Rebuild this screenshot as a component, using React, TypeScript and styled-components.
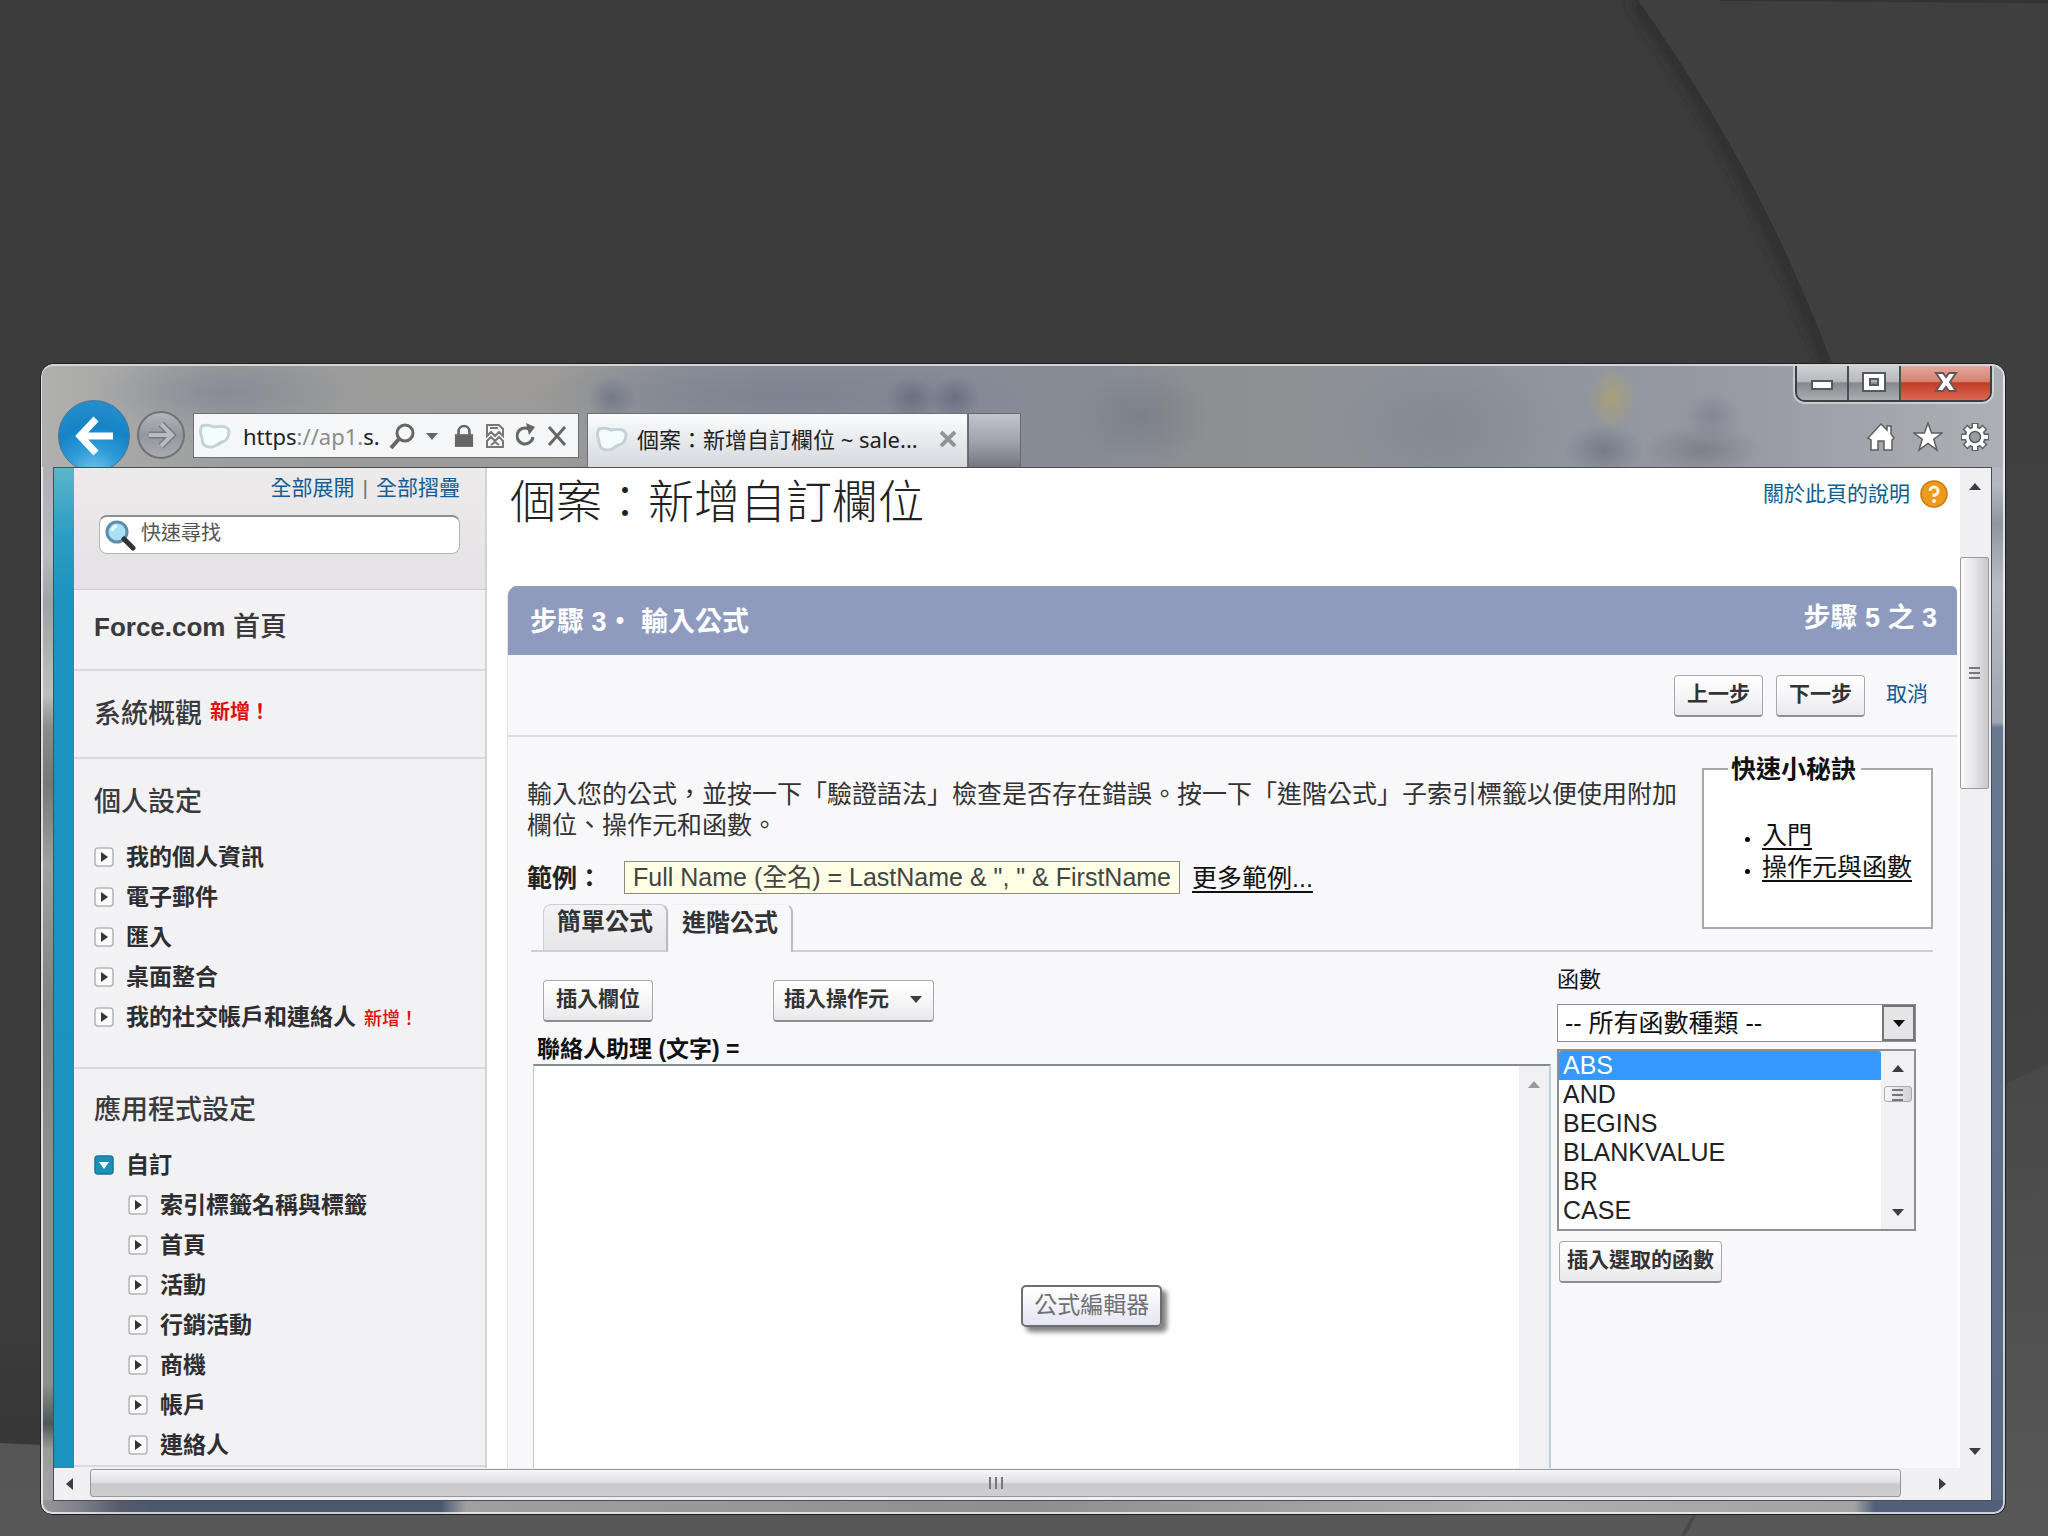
import React from "react";
import styled, { createGlobalStyle, css } from "styled-components";

const sans = `"Liberation Sans", "Noto Sans CJK TC", sans-serif`;
const chromeFont = `"Noto Sans", "Noto Sans CJK TC", sans-serif`;

const GlobalStyle = createGlobalStyle`
  *, *::before, *::after { box-sizing: border-box; }
  body { margin: 0; background: #3c3c3c; font-family: ${sans}; }
  button, input, select, textarea { font-family: inherit; margin: 0; }
  ul, p, h1, h2, h3 { margin: 0; padding: 0; }
`;

/* ---------- slide and window frame ---------- */

const Slide = styled.div`
  position: relative;
  display: flex;
  flex-direction: column;
  height: 100vh;
  padding: 363px 42px 21px 40px;
  overflow: hidden;
`;

const Backdrop = styled.svg`
  position: absolute;
  inset: 0;
  width: 100%;
  height: 100%;
`;

const BrowserWindow = styled.div`
  position: relative;
  flex: 1;
  min-height: 0;
  display: flex;
  flex-direction: column;
  padding: 0 13px 13px 12px;
  border: 1px solid #1d2024;
  border-radius: 14px 14px 12px 12px;
  box-shadow: inset 0 0 0 2px rgba(255, 255, 255, 0.7);
  background:
    linear-gradient(90deg, #999 0, #7d7f8a 40px, #56596c 80px, #4a5870 120px, #4a5870 400px, #a09fa1 425px, #8e8e90 50%, #b0afb0 75%, #a3a2a4 calc(100% - 150px), #50607a calc(100% - 130px), #50607a 100%) bottom / 100% 14px no-repeat,
    linear-gradient(180deg, #a6a9ae 0, #b5b9c0 120px, #8f969f 160px, #b9bcc4 220px, #a0a7b3 358px, #68788f 364px, #5b6a82 100%) right / 15px 100% no-repeat,
    linear-gradient(180deg, #a3a3a3 0, #b9b8c4 190px, #a0a0a8 240px, #bfc0bc 330px, #8b8b8b 364px, #777 420px, #a0a0a0 500px, #808080 640px, #8f8f8f 800px, #8e8f90 1020px, #50555a 1060px, #9c9c9e 1085px, #a6a6a8 100%) left / 13px 100% no-repeat,
    #999;
`;

const Chrome = styled.header`
  flex: none;
  display: flex;
  justify-content: space-between;
  height: 103px;
  margin: 0 -11px;
  padding: 0 11px;
  overflow: hidden;
  border-radius: 12px 12px 0 0;
  border-top: 2px solid #d3d4d6;
  background:
    radial-gradient(ellipse 24px 32px at 1570px 32px, rgba(186, 168, 84, 0.55), transparent),
    radial-gradient(ellipse 40px 26px at 1562px 84px, rgba(100, 106, 120, 0.6), transparent),
    radial-gradient(ellipse 60px 26px at 1660px 84px, rgba(106, 112, 122, 0.6), transparent),
    radial-gradient(ellipse 30px 24px at 1670px 50px, rgba(106, 112, 128, 0.45), transparent),
    radial-gradient(ellipse 120px 80px at 1400px 60px, rgba(118, 128, 138, 0.5), transparent),
    radial-gradient(ellipse 130px 44px at 180px 26px, rgba(116, 122, 142, 0.5), transparent),
    radial-gradient(ellipse 24px 22px at 570px 32px, rgba(90, 98, 120, 0.5), transparent),
    radial-gradient(ellipse 26px 22px at 870px 32px, rgba(88, 96, 120, 0.6), transparent),
    radial-gradient(ellipse 26px 22px at 912px 32px, rgba(88, 96, 120, 0.6), transparent),
    radial-gradient(ellipse 260px 44px at 740px 30px, rgba(108, 116, 134, 0.45), transparent),
    radial-gradient(ellipse 70px 50px at 1100px 50px, rgba(108, 114, 122, 0.45), transparent),
    linear-gradient(90deg, #b0b0ae 0, #9b9c9d 10%, #9c9b98 26%, #8c9099 32%, #868b96 52%, #8d9092 60%, #8f969f 78%, #9a9aa4 87%, #adb0b4 100%);
`;

const NavGroup = styled.div`
  display: flex;
  align-items: flex-end;
`;

const BackButton = styled.button`
  display: grid;
  place-items: center;
  width: 72px;
  height: 72px;
  margin: 0 7px -5px 5px;
  padding: 0;
  border: 1px solid #4a7391;
  border-radius: 50%;
  background: radial-gradient(circle at 50% 105%, #7cc6ee 0, #2f9cd9 32%, #1583c6 60%, #2a93cf 100%);
`;

const ForwardButton = styled.button`
  display: grid;
  place-items: center;
  width: 48px;
  height: 48px;
  margin: 0 8px 8px 0;
  padding: 0;
  border: 2px solid #6f7379;
  border-radius: 50%;
  background: linear-gradient(#b3b5ba, #94979d 50%, #a9abb0);
`;

const AddressBar = styled.div`
  display: flex;
  align-items: center;
  gap: 11px;
  width: 386px;
  height: 45px;
  margin: 0 8px 9px 0;
  padding: 0 11px 0 4px;
  border: 1px solid #6c7075;
  background: #f5f6f7;
  font-family: ${chromeFont};
  font-size: 22px;
  line-height: 32px;
  color: #222;
  i { font-style: normal; color: #8b8b8b; }
`;

const AddressText = styled.span`
  flex: 1;
  white-space: nowrap;
`;

const SearchTools = styled.div`
  flex: none;
  display: flex;
  align-items: center;
  gap: 10px;
  margin: 0 4px 0 -8px;
`;

const IconButton = styled.button`
  display: grid;
  place-items: center;
  flex: none;
  padding: 0;
  border: 0;
  background: none;
`;

const Tab = styled.div`
  display: flex;
  align-items: center;
  gap: 8px;
  width: 381px;
  height: 54px;
  padding: 0 11px 3px 7px;
  border: 1px solid #6d7076;
  border-bottom: 0;
  background: linear-gradient(#fbfcfd, #e3e6ea 60%, #d6dade);
  font-family: ${chromeFont};
  font-size: 22px;
  line-height: 32px;
  color: #222;
  white-space: nowrap;
  span { flex: 1; }
`;

const NewTab = styled.button`
  width: 53px;
  height: 54px;
  border: 1px solid #666a70;
  border-bottom: 0;
  background: linear-gradient(#c2c5cc, #a2a5ac 50%, #74777d);
`;

const ChromeRight = styled.div`
  display: flex;
  flex-direction: column;
  align-items: flex-end;
  justify-content: space-between;
`;

const WindowControls = styled.div`
  display: flex;
  overflow: hidden;
  border: 2px solid #3c3f45;
  border-top: 0;
  border-radius: 0 0 10px 10px;
  box-shadow: 0 0 0 2px rgba(220, 222, 226, 0.7);
`;

const ControlButton = styled.button<{ $close?: boolean }>`
  display: grid;
  place-items: center;
  width: ${(p) => (p.$close ? 89 : 52)}px;
  height: 34px;
  padding: 0 0 2px;
  border: 0;
  border-right: ${(p) => (p.$close ? "0" : "2px solid #4c4f55")};
  background: ${(p) =>
    p.$close
      ? "linear-gradient(#e5a79b, #d88373 45%, #c23c25 50%, #dd6852 100%)"
      : "linear-gradient(#cfd0d3, #b8b9bd 45%, #85888d 50%, #a9acb1 100%)"};
`;

const ToolIcons = styled.div`
  display: flex;
  gap: 17px;
  margin: 0 2px 15px 0;
`;

/* ---------- viewport ---------- */

const Viewport = styled.div`
  flex: 1;
  min-height: 0;
  display: flex;
  flex-direction: column;
  border: 1px solid #4a4d52;
  background: #fff;
`;

const Page = styled.div`
  flex: 1;
  min-height: 0;
  display: flex;
`;

const BrandStrip = styled.div`
  flex: none;
  width: 20px;
  background: linear-gradient(#5cb6cb 0, #2f9fc3 60px, #1b92bf 130px, #1a93c0 100%);
`;

const Sidebar = styled.nav`
  flex: none;
  width: 413px;
  overflow: hidden;
  border-right: 2px solid #d3d2d6;
  background: #f2f1f4;
`;

const QuickBox = styled.div`
  display: flex;
  flex-direction: column;
  gap: 13px;
  padding: 6px 25px 35px 25px;
  border-bottom: 1px solid #cfcdd0;
  background: linear-gradient(#eceaeb, #e4e2e4);
`;

const ToggleLinks = styled.div`
  display: flex;
  justify-content: flex-end;
  gap: 8px;
  font-size: 21px;
  line-height: 28px;
  color: #777;
`;

const BlueLink = styled.a`
  font-size: 21px;
  color: #0f5c96;
  text-decoration: none;
`;

const SearchField = styled.label`
  display: flex;
  align-items: center;
  gap: 5px;
  height: 39px;
  padding: 0 4px;
  border: 1px solid #b5b5b8;
  border-top: 2px solid #8f8f92;
  border-radius: 8px;
  background: #fff;
`;

const SearchInput = styled.input`
  flex: 1;
  min-width: 0;
  padding: 0 0 4px;
  border: 0;
  outline: 0;
  background: transparent;
  font-size: 20px;
  line-height: 28px;
  color: #444;
  &::placeholder { color: #555; opacity: 1; }
`;

const SideSection = styled.section<{ $top: number; $bottom: number }>`
  padding: ${(p) => p.$top}px 20px ${(p) => p.$bottom}px;
  border-bottom: 2px solid #dad9dd;
`;

const SideHeading = styled.h2`
  font-size: 27px;
  line-height: 32px;
  font-weight: 500;
  color: #3a3a3d;
  b { font-size: 26px; }
`;

const NewFlag = styled.span<{ $small?: boolean }>`
  margin-left: 8px;
  font-size: ${(p) => (p.$small ? 18 : 20)}px;
  font-weight: ${(p) => (p.$small ? 500 : 700)};
  color: #e30b0b;
  vertical-align: ${(p) => (p.$small ? "baseline" : "4px")};
  line-height: 20px;
`;

const Tree = styled.ul<{ $nested?: boolean }>`
  list-style: none;
  ${(p) => (p.$nested ? css`padding-left: 34px;` : css`padding-top: 19px;`)}
`;

const TreeRow = styled.li`
  display: flex;
  align-items: center;
  height: 40px;
  gap: 12px;
  white-space: nowrap;
`;

const TreeLink = styled.a`
  font-size: 23px;
  line-height: 32px;
  font-weight: 700;
  color: #2e2e31;
  text-decoration: none;
`;

const Main = styled.main`
  flex: 1;
  min-width: 0;
  overflow: hidden;
  display: flex;
  flex-direction: column;
  padding: 0 3px 0 20px;
`;

const PageHead = styled.div`
  flex: none;
  display: flex;
  justify-content: space-between;
  align-items: flex-start;
  height: 118px;
  padding: 6px 9px 0 3px;
`;

const PageTitle = styled.h1`
  font-size: 46px;
  line-height: 56px;
  font-weight: 300;
  color: #222;
`;

const HelpLink = styled.a`
  display: flex;
  align-items: center;
  gap: 10px;
  font-size: 21px;
  line-height: 40px;
  color: #10608f;
  text-decoration: none;
`;

const Block = styled.section`
  flex: 1;
  min-height: 0;
  display: flex;
  flex-direction: column;
  border-left: 1px solid #e2e1e6;
  border-radius: 10px 6px 0 0;
  overflow: hidden;
  background: #f8f7fa;
`;

const BlockHead = styled.div`
  flex: none;
  display: flex;
  justify-content: space-between;
  height: 69px;
  padding: 18px 20px 0 22px;
  border-top: 2px solid #929db4;
  background: #8e9bbe;
  color: #fff;
`;

const StepTitle = styled.h2`
  font-size: 27px;
  line-height: 32px;
  font-weight: 700;
`;

const StepCount = styled.div`
  font-size: 27px;
  line-height: 24px;
  font-weight: 700;
`;

const ActionRow = styled.div`
  flex: none;
  display: flex;
  justify-content: flex-end;
  align-items: flex-start;
  gap: 13px;
  padding: 20px 29px 18px;
  border-bottom: 2px solid #dddce0;
  ${BlueLink} { margin-left: 8px; line-height: 38px; }
`;

const PushButton = styled.button<{ $pad?: number }>`
  display: flex;
  align-items: center;
  gap: 20px;
  height: 42px;
  padding: 0 ${(p) => p.$pad ?? 12}px 4px;
  border: 1px solid #a9a8ac;
  border-bottom: 2px solid #8f8e92;
  border-radius: 4px;
  background: linear-gradient(#fff, #f6f5f7 50%, #e9e8ea);
  font-size: 21px;
  line-height: 30px;
  font-weight: 700;
  color: #333;
  white-space: nowrap;
`;

const Intro = styled.div`
  flex: none;
  display: grid;
  grid-template-columns: minmax(0, 1fr) 231px;
  column-gap: 16px;
  margin: 0 24px 0 23px;
  padding-top: 16px;
  border-bottom: 2px solid #cfced2;
`;

const Explain = styled.div`
  display: flex;
  flex-direction: column;
  padding-top: 26px;
`;

const Lead = styled.p`
  margin-left: -4px;
  font-size: 25px;
  line-height: 31px;
  color: #333;
`;

const ExampleRow = styled.div`
  display: flex;
  align-items: center;
  margin: 20px 0 10px -4px;
  font-size: 25px;
  line-height: 32px;
  color: #222;
`;

const ExampleBox = styled.code`
  height: 33px;
  margin: 0 12px 0 22px;
  padding: 0 8px;
  border: 1px solid #8b8b80;
  background: #ffffe6;
  font-family: inherit;
  line-height: 30px;
  color: #444;
`;

const DarkLink = styled.a`
  color: #111;
  text-decoration: underline;
  text-underline-offset: 4px;
`;

const Tabs = styled.div`
  display: flex;
  margin: 0 0 -2px 12px;
`;

const FormulaTab = styled.button<{ $active?: boolean }>`
  height: 48px;
  padding: 0 13px 12px;
  border: 1px solid ${(p) => (p.$active ? "#f0eff3" : "#cfced3")};
  border-right: 2px solid #bdbcc2;
  border-bottom: ${(p) => (p.$active ? "0" : "2px solid #cfced2")};
  border-radius: 8px 8px 0 0;
  background: ${(p) => (p.$active ? "#f8f7fa" : "linear-gradient(#f3f2f4, #e6e5e8)")};
  font-size: 24px;
  line-height: 32px;
  font-weight: 700;
  color: #333;
`;

const Tips = styled.fieldset`
  align-self: start;
  margin: 0;
  padding: 34px 0 44px 24px;
  border: 2px solid #a9a8ac;
  background: #fff;
  legend {
    padding: 0 5px 0 3px;
    font-size: 25px;
    line-height: 32px;
    font-weight: 700;
    color: #111;
  }
  ul { padding-left: 34px; font-size: 25px; line-height: 32px; }
  li::marker { font-size: 18px; }
`;

const Workspace = styled.div`
  flex: 1;
  min-height: 0;
  display: grid;
  grid-template-columns: minmax(0, 1fr) 359px;
  column-gap: 6px;
  padding: 0 41px 0 25px;
`;

const EditorColumn = styled.div`
  display: flex;
  flex-direction: column;
  min-height: 0;
`;

const InsertRow = styled.div`
  display: flex;
  gap: 120px;
  padding: 28px 0 12px 10px;
`;

const FieldLabel = styled.label`
  padding-left: 4px;
  font-size: 23px;
  line-height: 30px;
  font-weight: 700;
  color: #111;
`;

const EditorBox = styled.div`
  position: relative;
  flex: 1;
  min-height: 0;
  display: flex;
  border: 1px solid #bfc8cd;
  border-top: 2px solid #858c90;
  border-right: 2px solid #b9cfdb;
  border-bottom: 0;
  background: #fff;
`;

const Editor = styled.textarea`
  flex: 1;
  min-width: 0;
  padding: 6px;
  border: 0;
  outline: 0;
  resize: none;
  background: #fff;
  font-size: 25px;
`;

const EditorScroll = styled.div`
  flex: none;
  width: 30px;
  padding-top: 11px;
  background: #f1f0f3;
  text-align: center;
  line-height: 12px;
`;

const Tooltip = styled.div`
  position: absolute;
  left: 48%;
  top: 219px;
  padding: 4px 11px 6px;
  border: 2px solid #6d6d72;
  border-radius: 5px;
  background: linear-gradient(#fff, #e4e5f1);
  box-shadow: 5px 5px 5px rgba(0, 0, 0, 0.5);
  font-size: 23px;
  line-height: 28px;
  color: #707074;
`;

const FunctionColumn = styled.div`
  display: flex;
  flex-direction: column;
  align-items: stretch;
  padding-top: 14px;
  > label { font-size: 22px; line-height: 28px; color: #111; }
`;

const SelectBox = styled.div`
  display: flex;
  height: 38px;
  margin: 10px 0 7px;
  border: 1px solid #8e8d92;
  background: #fff;
`;

const CategorySelect = styled.select`
  flex: 1;
  min-width: 0;
  padding: 0 7px;
  border: 0;
  appearance: none;
  background: transparent;
  font-size: 25px;
  color: #111;
`;

const SelectArrow = styled.div`
  display: grid;
  place-items: center;
  width: 33px;
  border: 2px solid #75757a;
  background: #e5e5e8;
`;

const ListBox = styled.div`
  display: flex;
  height: 182px;
  margin-bottom: 10px;
  border: 2px solid #8e8e93;
  background: #fff;
`;

const FunctionList = styled.select`
  flex: 1;
  min-width: 0;
  padding: 0;
  border: 0;
  outline: 0;
  overflow: hidden;
  scrollbar-width: none;
  background: #fff;
  font-size: 25px;
  color: #222;
  option {
    min-height: 29px;
    padding: 0 0 0 4px;
    line-height: 29px;
  }
  option:checked {
    background: linear-gradient(#3399ff, #3399ff);
    color: #fff;
  }
`;

const ListScroll = styled.div`
  display: flex;
  flex-direction: column;
  align-items: center;
  width: 33px;
  padding: 10px 0;
  background: #f1f1f4;
`;

const ListThumb = styled.div`
  display: grid;
  place-items: center;
  width: 28px;
  height: 16px;
  margin: 11px 0 auto;
  border: 1px solid #aaa9ad;
  border-radius: 3px;
  background: linear-gradient(90deg, #f6f6f7, #d2d1d5);
`;

const InsertHolder = styled.div`
  padding-left: 2px;
`;

/* ---------- scroll bars ---------- */

const VScroll = styled.div`
  flex: none;
  width: 31px;
  display: flex;
  flex-direction: column;
  align-items: center;
  padding: 11px 2px 10px 0;
  background: #f0eff2;
`;

const VThumb = styled.div`
  display: grid;
  place-items: center;
  width: 29px;
  height: 232px;
  margin: 64px 0 auto;
  border: 1px solid #9c9ba0;
  border-radius: 2px;
  background: linear-gradient(90deg, #fbfbfb, #e7e6e8 45%, #c8c7ca);
`;

const HScroll = styled.div`
  flex: none;
  display: flex;
  align-items: center;
  gap: 14px;
  height: 32px;
  padding: 0 42px 0 8px;
  background: #f0eff2;
`;

const HThumb = styled.div`
  flex: 1;
  display: grid;
  place-items: center;
  height: 28px;
  margin: 0 20px 2px 0;
  border: 1px solid #98979b;
  border-radius: 3px;
  background: linear-gradient(#f6f5f7, #e2e1e3 45%, #c9c8cb 55%, #cfced1);
`;

/* ---------- drawings ---------- */

type Dir = "up" | "down" | "left" | "right";

const Arrow = ({ dir, color = "#3d3d42", size = 14 }: { dir: Dir; color?: string; size?: number }) => {
  const d = {
    up: "M1 11 L7 4 L13 11Z",
    down: "M1 4 L13 4 L7 11Z",
    left: "M11 1 L4 7 L11 13Z",
    right: "M4 1 L11 7 L4 13Z",
  }[dir];
  return (
    <svg width={size} height={size} viewBox="0 0 14 14" aria-hidden>
      <path d={d} fill={color} />
    </svg>
  );
};

const Cloud = () => (
  <svg width="34" height="30" viewBox="0 0 34 30" aria-hidden>
    <path
      d="M4 5 C10 3 13 5 16 6 C22 5 30 5 31 10 C31 16 28 20 24 21 C19 23 16 27 12 26 C6 26 4 22 4 17 C2 12 2 8 4 5Z"
      fill="#f3fdfd"
      stroke="#c3d3d4"
      strokeWidth="3"
    />
  </svg>
);

const Expander = ({ open }: { open?: boolean }) => (
  <svg width="20" height="20" viewBox="0 0 20 20" aria-hidden>
    <rect x="1" y="1" width="18" height="18" rx="3" fill={open ? "#1c8fb4" : "#fbfbfc"} stroke={open ? "#15799b" : "#b4b4b9"} strokeWidth="1.5" />
    {open ? <path d="M5 7 H15 L10 14Z" fill="#fff" /> : <path d="M7 5 L14 10 L7 15Z" fill="#333" />}
  </svg>
);

const Grip = ({ vertical }: { vertical?: boolean }) => (
  <svg width="16" height="16" viewBox="0 0 16 16" aria-hidden>
    <path
      d={vertical ? "M2 2 V14 M8 2 V14 M14 2 V14" : "M2 3 H13 M2 8 H13 M2 13 H13"}
      stroke="#77767b"
      strokeWidth="2"
    />
  </svg>
);

const personal = ["我的個人資訊", "電子郵件", "匯入", "桌面整合", "我的社交帳戶和連絡人"];
const custom = ["索引標籤名稱與標籤", "首頁", "活動", "行銷活動", "商機", "帳戶", "連絡人"];
const functions = ["ABS", "AND", "BEGINS", "BLANKVALUE", "BR", "CASE"];

export default function App() {
  return (
    <>
      <GlobalStyle />
      <Slide lang="zh-Hant">
        <Backdrop viewBox="0 0 2048 1536" preserveAspectRatio="none" aria-hidden>
          <defs>
            <linearGradient id="base" x1="0" y1="0" x2="0" y2="1">
              <stop offset="0" stopColor="#3b3b3b" />
              <stop offset="0.85" stopColor="#3c3c3c" />
              <stop offset="0.93" stopColor="#373737" />
            </linearGradient>
            <linearGradient id="low" x1="0" y1="0" x2="0" y2="1">
              <stop offset="0" stopColor="#484848" />
              <stop offset="1" stopColor="#585858" />
            </linearGradient>
            <linearGradient id="side" x1="0" y1="0" x2="0" y2="1">
              <stop offset="0" stopColor="#3f3f3f" />
              <stop offset="0.6" stopColor="#404040" />
              <stop offset="1" stopColor="#4a4a4a" />
            </linearGradient>
            <filter id="soft" x="-10%" y="-10%" width="120%" height="120%">
              <feGaussianBlur stdDeviation="6" />
            </filter>
          </defs>
          <rect width="2048" height="1536" fill="url(#base)" />
          <path d="M1634 0 C1728 130 1788 260 1828 364 C1980 800 1880 1200 1678 1536" fill="none" stroke="#2c2c2c" strokeWidth="10" filter="url(#soft)" />
          <path d="M1638 0 H2048 V1536 H1683 C1900 1200 1980 800 1832 364 C1790 250 1730 130 1638 0Z" fill="url(#side)" />
          <path d="M1720 0 H2048 V3 L1720 1Z" fill="#333" />
          <path d="M0 1443 Q900 1490 2007 1083 L2048 1064 V1536 H0Z" fill="url(#low)" />
          <path d="M1696 1512 L1683 1536" stroke="#4a4a4a" strokeWidth="4" />
        </Backdrop>

        <BrowserWindow>
          <Chrome>
            <NavGroup>
              <BackButton aria-label="上一頁">
                <svg width="44" height="44" viewBox="0 0 44 44" aria-hidden>
                  <path d="M24 5 L8 22 L24 39 M9 22 H41" fill="none" stroke="#fff" strokeWidth="7" />
                </svg>
              </BackButton>
              <ForwardButton aria-label="下一頁">
                <svg width="30" height="30" viewBox="0 0 30 30" aria-hidden>
                  <path d="M15 4 L26 15 L15 26 M26 15 H3" fill="none" stroke="#777a80" strokeWidth="7" />
                  <path d="M15 4 L26 15 L15 26 M26 15 H3" fill="none" stroke="#b9bbc0" strokeWidth="4" />
                </svg>
              </ForwardButton>
              <AddressBar>
                <Cloud />
                <AddressText>
                  https<i>://ap1.</i>s.
                </AddressText>
                <SearchTools>
                  <IconButton aria-label="搜尋">
                    <svg width="26" height="28" viewBox="0 0 26 28" aria-hidden>
                      <circle cx="16" cy="11" r="8" fill="none" stroke="#666" strokeWidth="3" />
                      <path d="M10 17 L2 26" stroke="#666" strokeWidth="4" />
                    </svg>
                  </IconButton>
                  <Arrow dir="down" color="#666" />
                </SearchTools>
                <svg width="20" height="26" viewBox="0 0 22 26" aria-hidden>
                  <rect x="1" y="11" width="20" height="14" fill="#666" />
                  <path d="M5 12 V8 a6 6 0 0 1 12 0 V12" fill="none" stroke="#666" strokeWidth="3" />
                </svg>
                <IconButton aria-label="相容性檢視">
                  <svg width="20" height="26" viewBox="0 0 20 26" aria-hidden>
                    <path d="M2 13 V2 H14 L18 6 V13 L14 9 L10 13 L6 9Z M2 24 V18 L6 14 L10 18 L14 14 L18 18 V24Z" fill="none" stroke="#777" strokeWidth="2" />
                    <path d="M5 5 H13 M6 22 L10 19 L14 22" stroke="#777" strokeWidth="2" fill="none" />
                  </svg>
                </IconButton>
                <IconButton aria-label="重新整理">
                  <svg width="20" height="26" viewBox="0 0 20 26" aria-hidden>
                    <path d="M13 6 A8 8 0 1 0 17 14" fill="none" stroke="#666" strokeWidth="3" />
                    <path d="M10 0 L19 4 L13 12Z" fill="#666" />
                  </svg>
                </IconButton>
                <IconButton aria-label="停止">
                  <svg width="20" height="22" viewBox="0 0 20 22" aria-hidden>
                    <path d="M2 2 L18 20 M18 2 L2 20" stroke="#666" strokeWidth="3" />
                  </svg>
                </IconButton>
              </AddressBar>
              <Tab>
                <Cloud />
                <span>個案：新增自訂欄位 ~ sale...</span>
                <IconButton aria-label="關閉索引標籤">
                  <svg width="16" height="16" viewBox="0 0 16 16" aria-hidden>
                    <path d="M1 1 L15 15 M15 1 L1 15" stroke="#909398" strokeWidth="4" />
                  </svg>
                </IconButton>
              </Tab>
              <NewTab aria-label="新索引標籤" />
            </NavGroup>
            <ChromeRight>
              <WindowControls>
                <ControlButton aria-label="最小化">
                  <svg width="24" height="20" viewBox="0 0 24 20" aria-hidden>
                    <rect x="2" y="9" width="20" height="8" fill="#fff" stroke="#55585e" strokeWidth="2" />
                  </svg>
                </ControlButton>
                <ControlButton aria-label="最大化">
                  <svg width="24" height="20" viewBox="0 0 24 20" aria-hidden>
                    <path d="M1 1 H23 V19 H1Z M8 7 V13 H16 V7Z" fill="#fff" fillRule="evenodd" stroke="#55585e" strokeWidth="2" />
                  </svg>
                </ControlButton>
                <ControlButton $close aria-label="關閉">
                  <svg width="24" height="20" viewBox="0 0 24 20" aria-hidden>
                    <path d="M2 1 H9 L12 5 L15 1 H22 L16 10 L22 19 H15 L12 15 L9 19 H2 L8 10Z" fill="#fff" stroke="#6b5555" strokeWidth="2" />
                  </svg>
                </ControlButton>
              </WindowControls>
              <ToolIcons>
                <IconButton aria-label="首頁">
                  <svg width="30" height="30" viewBox="0 0 30 30" aria-hidden>
                    <path d="M15 2 L21 8 V4 H25 V12 L28 16 L26 18 V28 H18 V19 H12 V28 H5 V18 L2 16Z" fill="#fff" stroke="#5b5e63" strokeWidth="1.5" />
                  </svg>
                </IconButton>
                <IconButton aria-label="我的最愛">
                  <svg width="30" height="30" viewBox="0 0 30 30" aria-hidden>
                    <path d="M15 1 L18.6 11 H29 L20.8 17.2 L24 28 L15 21.4 L6 28 L9.2 17.2 L1 11 H11.4Z" fill="#fff" stroke="#5b5e63" strokeWidth="1.5" />
                  </svg>
                </IconButton>
                <IconButton aria-label="工具">
                  <svg width="30" height="30" viewBox="0 0 30 30" aria-hidden>
                    <g stroke="#5b5e63" strokeWidth="7">
                      <path d="M15 1 V29 M1 15 H29 M5 5 L25 25 M25 5 L5 25" />
                    </g>
                    <circle cx="15" cy="15" r="10" fill="#fff" stroke="#5b5e63" strokeWidth="1.5" />
                    <g stroke="#fff" strokeWidth="4">
                      <path d="M15 2 V28 M2 15 H28 M6 6 L24 24 M24 6 L6 24" />
                    </g>
                    <circle cx="15" cy="15" r="5.5" fill="#9a9ca2" stroke="#5b5e63" strokeWidth="1.5" />
                  </svg>
                </IconButton>
              </ToolIcons>
            </ChromeRight>
          </Chrome>

          <Viewport>
            <Page>
              <BrandStrip />
              <Sidebar>
                <QuickBox>
                  <ToggleLinks>
                    <BlueLink href="#expand">全部展開</BlueLink>|
                    <BlueLink href="#collapse">全部摺疊</BlueLink>
                  </ToggleLinks>
                  <SearchField>
                    <svg width="32" height="32" viewBox="0 0 32 32" aria-hidden>
                      <circle cx="13" cy="13" r="10" fill="#a9e0f6" stroke="#5f8ea8" strokeWidth="3" />
                      <path d="M8 12 A6 6 0 0 1 13 7" fill="none" stroke="#e8f8ff" strokeWidth="3" />
                      <path d="M20 20 L29 29" stroke="#333" strokeWidth="5" strokeLinecap="round" />
                    </svg>
                    <SearchInput type="text" aria-label="快速尋找" placeholder="快速尋找" />
                  </SearchField>
                </QuickBox>
                <SideSection $top={21} $bottom={26}>
                  <SideHeading><b>Force.com</b> 首頁</SideHeading>
                </SideSection>
                <SideSection $top={27} $bottom={27}>
                  <SideHeading>系統概觀<NewFlag>新增！</NewFlag></SideHeading>
                </SideSection>
                <SideSection $top={27} $bottom={30}>
                  <SideHeading>個人設定</SideHeading>
                  <Tree>
                    {personal.map((name, i) => (
                      <TreeRow key={name}>
                        <Expander />
                        <TreeLink href="#item">
                          {name}
                          {i === personal.length - 1 && <NewFlag $small>新增！</NewFlag>}
                        </TreeLink>
                      </TreeRow>
                    ))}
                  </Tree>
                </SideSection>
                <SideSection $top={25} $bottom={0}>
                  <SideHeading>應用程式設定</SideHeading>
                  <Tree>
                    <TreeRow>
                      <Expander open />
                      <TreeLink href="#item">自訂</TreeLink>
                    </TreeRow>
                  </Tree>
                  <Tree $nested>
                    {custom.map((name) => (
                      <TreeRow key={name}>
                        <Expander />
                        <TreeLink href="#item">{name}</TreeLink>
                      </TreeRow>
                    ))}
                  </Tree>
                </SideSection>
              </Sidebar>

              <Main>
                <PageHead>
                  <PageTitle>個案：新增自訂欄位</PageTitle>
                  <HelpLink href="#help">
                    關於此頁的說明
                    <svg width="28" height="28" viewBox="0 0 28 28" aria-hidden>
                      <circle cx="14" cy="14" r="13" fill="#eb9a1e" stroke="#c97a12" strokeWidth="1.5" />
                      <path d="M10 11 A4 4 0 1 1 14 15 V17" fill="none" stroke="#fff3d6" strokeWidth="3" />
                      <circle cx="14" cy="21" r="2" fill="#fff3d6" />
                    </svg>
                  </HelpLink>
                </PageHead>

                <Block>
                  <BlockHead>
                    <StepTitle>步驟 3・ 輸入公式</StepTitle>
                    <StepCount>步驟 5 之 3</StepCount>
                  </BlockHead>
                  <ActionRow>
                    <PushButton>上一步</PushButton>
                    <PushButton>下一步</PushButton>
                    <BlueLink href="#cancel">取消</BlueLink>
                  </ActionRow>

                  <Intro>
                    <Explain>
                      <Lead>
                        輸入您的公式，並按一下「驗證語法」檢查是否存在錯誤。按一下「進階公式」子索引標籤以便使用附加欄位、操作元和函數。
                      </Lead>
                      <ExampleRow>
                        <b>範例：</b>
                        <ExampleBox>Full Name (全名) = LastName &amp; ", " &amp; FirstName</ExampleBox>
                        <DarkLink href="#more">更多範例...</DarkLink>
                      </ExampleRow>
                      <Tabs role="tablist">
                        <FormulaTab role="tab">簡單公式</FormulaTab>
                        <FormulaTab role="tab" $active aria-selected>進階公式</FormulaTab>
                      </Tabs>
                    </Explain>
                    <Tips>
                      <legend>快速小秘訣</legend>
                      <ul>
                        <li><DarkLink href="#start">入門</DarkLink></li>
                        <li><DarkLink href="#operators">操作元與函數</DarkLink></li>
                      </ul>
                    </Tips>
                  </Intro>

                  <Workspace>
                    <EditorColumn>
                      <InsertRow>
                        <PushButton>插入欄位</PushButton>
                        <PushButton $pad={10}>插入操作元 <Arrow dir="down" /></PushButton>
                      </InsertRow>
                      <FieldLabel htmlFor="formula">聯絡人助理 (文字) =</FieldLabel>
                      <EditorBox>
                        <Editor id="formula" />
                        <EditorScroll><Arrow dir="up" color="#98989d" /></EditorScroll>
                        <Tooltip role="tooltip">公式編輯器</Tooltip>
                      </EditorBox>
                    </EditorColumn>
                    <FunctionColumn>
                      <label htmlFor="category">函數</label>
                      <SelectBox>
                        <CategorySelect id="category">
                          <option>-- 所有函數種類 --</option>
                        </CategorySelect>
                        <SelectArrow><Arrow dir="down" color="#111" /></SelectArrow>
                      </SelectBox>
                      <ListBox>
                        <FunctionList size={6} defaultValue="ABS" aria-label="函數清單">
                          {functions.map((name) => (
                            <option key={name} value={name}>{name}</option>
                          ))}
                        </FunctionList>
                        <ListScroll>
                          <Arrow dir="up" />
                          <ListThumb><Grip /></ListThumb>
                          <Arrow dir="down" />
                        </ListScroll>
                      </ListBox>
                      <InsertHolder>
                        <PushButton $pad={7}>插入選取的函數</PushButton>
                      </InsertHolder>
                    </FunctionColumn>
                  </Workspace>
                </Block>
              </Main>

              <VScroll>
                <Arrow dir="up" />
                <VThumb><Grip /></VThumb>
                <Arrow dir="down" />
              </VScroll>
            </Page>
            <HScroll>
              <Arrow dir="left" />
              <HThumb><Grip vertical /></HThumb>
              <Arrow dir="right" />
            </HScroll>
          </Viewport>
        </BrowserWindow>
      </Slide>
    </>
  );
}
